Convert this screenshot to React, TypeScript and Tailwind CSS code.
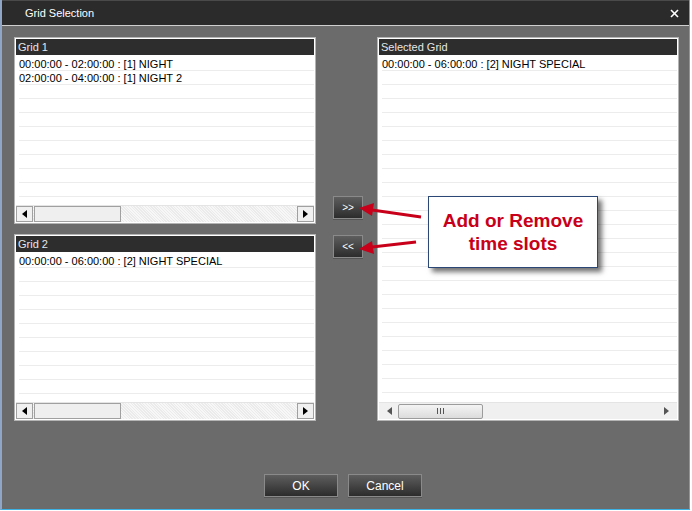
import React from "react";

const font = { fontFamily: '"Liberation Sans", Arial, sans-serif' };

type Row = string;

function LeftArrow({ color = "#000" }: { color?: string }) {
  return (
    <svg width="5" height="8" viewBox="0 0 5 8">
      <polygon points="5,0 5,8 0,4" fill={color} />
    </svg>
  );
}

function RightArrow({ color = "#000" }: { color?: string }) {
  return (
    <svg width="5" height="8" viewBox="0 0 5 8">
      <polygon points="0,0 0,8 5,4" fill={color} />
    </svg>
  );
}

function ClassicScrollbar() {
  return (
    <div className="h-[17px] flex bg-[repeating-linear-gradient(45deg,#ebebeb_0px,#ebebeb_1px,#f7f7f7_1px,#f7f7f7_2px)] border-t border-[#e4e4e4]">
      <div className="w-[17px] h-full bg-[#f0f0f0] border border-[#a0a0a0] flex items-center justify-center">
        <LeftArrow />
      </div>
      <div className="w-[87px] h-full bg-[#efefef] border border-[#a0a0a0] ml-px" />
      <div className="flex-1" />
      <div className="w-[17px] h-full bg-[#f0f0f0] border border-[#a0a0a0] flex items-center justify-center">
        <RightArrow />
      </div>
    </div>
  );
}

function ModernScrollbar() {
  return (
    <div className="h-[17px] flex items-center bg-[#f0f0f0] border-t border-[#e4e4e4] px-[8px]">
      <LeftArrow color="#555" />
      <div className="ml-[6px] w-[85px] h-[15px] rounded-[2px] border border-[#9c9c9c] bg-[linear-gradient(#f4f4f4,#dcdcdc)] flex items-center justify-center gap-[1px]">
        <div className="w-px h-[6px] bg-[#555]" />
        <div className="w-px h-[6px] bg-[#555] ml-[1px]" />
        <div className="w-px h-[6px] bg-[#555] ml-[1px]" />
      </div>
      <div className="flex-1" />
      <RightArrow color="#555" />
    </div>
  );
}

function GridPanel({
  title,
  rows,
  className,
  modern,
}: {
  title: string;
  rows: Row[];
  className: string;
  modern?: boolean;
}) {
  const lines = Array.from({ length: 30 });
  return (
    <div className={`${className} flex flex-col bg-white border border-[#b4b4b4] p-px`}>
      <div className="h-[16px] bg-[#2d2d2d] text-[#e6e6e6] text-[11px] leading-[16px] pl-[2px]">
        {title}
      </div>
      <div className="flex-1 overflow-hidden pt-[2px] pl-[3px]">
        {lines.map((_, i) => (
          <div
            key={i}
            className="h-[14px] border-b border-[#ececec] text-[11px] leading-[15px] text-black whitespace-nowrap"
          >
            {rows[i] ?? ""}
          </div>
        ))}
      </div>
      {modern ? <ModernScrollbar /> : <ClassicScrollbar />}
    </div>
  );
}

function DarkButton({ label, className }: { label: string; className: string }) {
  return (
    <div
      className={`${className} border border-[#8a8a8a] bg-[linear-gradient(#5e5e5e,#2c2c2c)] text-white flex items-center justify-center shadow-[0_1px_0_#555]`}
    >
      {label}
    </div>
  );
}

export default function App() {
  return (
    <div className="w-[692px] h-[511px] bg-white" style={font}>
      <div className="relative w-[690px] h-[510px] flex flex-col bg-[#6b6b6b] border-l-2 border-l-[#8fa6c6] border-r border-r-[#3cb2e4] border-b border-b-[#3cb2e4]">
        {/* title bar */}
        <div className="h-[26px] bg-[#2b2b2b] border-t border-[#4a4a4a] border-b border-b-[#cfcfcf] flex items-center pl-[23px] pr-[10px]">
          <span className="text-white text-[11px]">Grid Selection</span>
          <div className="flex-1" />
          <svg width="9" height="9" viewBox="0 0 9 9">
            <line x1="1" y1="1" x2="8" y2="8" stroke="#fff" strokeWidth="1.6" />
            <line x1="8" y1="1" x2="1" y2="8" stroke="#fff" strokeWidth="1.6" />
          </svg>
        </div>

        {/* body */}
        <div className="flex pt-[11px] pl-[12px]">
          <div className="flex flex-col gap-[10px]">
            <GridPanel
              title="Grid 1"
              className="w-[302px] h-[187px]"
              rows={[
                "00:00:00 - 02:00:00 : [1] NIGHT",
                "02:00:00 - 04:00:00 : [1] NIGHT 2",
              ]}
            />
            <GridPanel
              title="Grid 2"
              className="w-[302px] h-[187px]"
              rows={["00:00:00 - 06:00:00 : [2] NIGHT SPECIAL"]}
            />
          </div>
          <div className="w-[61px] flex flex-col pt-[159px] pl-[17px] gap-[16px]">
            <DarkButton label=">>" className="w-[30px] h-[23px] text-[10px]" />
            <DarkButton label="<<" className="w-[30px] h-[23px] text-[10px]" />
          </div>
          <GridPanel
            title="Selected Grid"
            className="w-[302px] h-[384px]"
            modern
            rows={["00:00:00 - 06:00:00 : [2] NIGHT SPECIAL"]}
          />
        </div>

        {/* footer buttons */}
        <div className="flex gap-[10px] pl-[262px] mt-[53px]">
          <DarkButton label="OK" className="w-[74px] h-[23px] text-[12px]" />
          <DarkButton label="Cancel" className="w-[74px] h-[23px] text-[12px]" />
        </div>

        {/* annotation arrows */}
        <svg
          className="absolute left-[-2px] top-0 pointer-events-none"
          width="692"
          height="511"
          viewBox="0 0 692 511"
        >
          <line x1="421" y1="217" x2="372" y2="210" stroke="#c8001a" strokeWidth="3" />
          <polygon points="359,208 374,203 372,216" fill="#c8001a" />
          <line x1="416" y1="242" x2="372" y2="247" stroke="#c8001a" strokeWidth="3" />
          <polygon points="359,249 372,241 374,254" fill="#c8001a" />
        </svg>

        {/* callout */}
        <div className="absolute left-[426px] top-[196px] w-[170px] h-[72px] bg-white border border-[#2a4775] shadow-[4px_4px_5px_rgba(0,0,0,0.55)] flex flex-col items-center justify-center text-[#c8001a] font-bold text-[19px] leading-[23px]">
          <span>Add or Remove</span>
          <span>time slots</span>
        </div>
      </div>
    </div>
  );
}
